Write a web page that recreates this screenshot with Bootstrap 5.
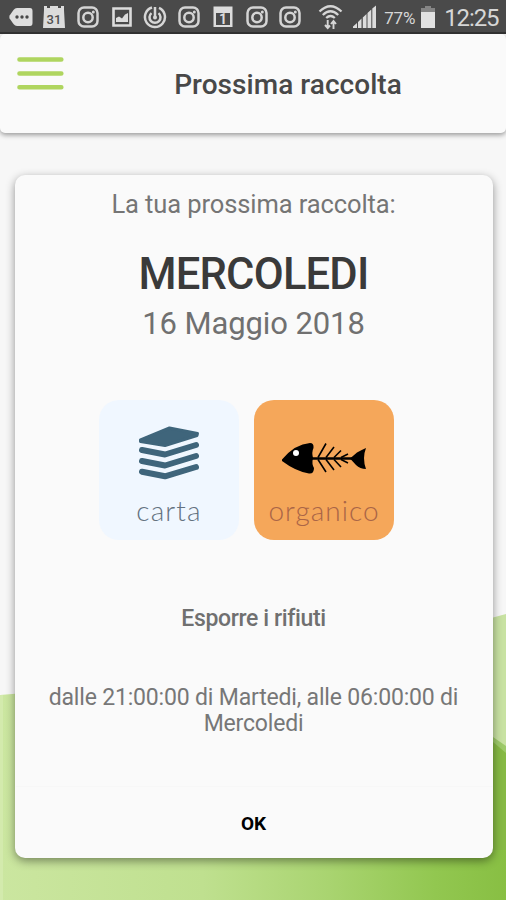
<!DOCTYPE html>
<html lang="it">
<head>
<meta charset="utf-8">
<meta name="viewport" content="width=device-width, initial-scale=1">
<title>Prossima raccolta</title>
<link href="https://cdn.jsdelivr.net/npm/bootstrap@5.3.0/dist/css/bootstrap.min.css" rel="stylesheet">
<style>
  body { font-family: Roboto, "Liberation Sans", sans-serif; background: #f7f7f7; width: 506px; height: 900px; }
  svg { display: block; flex: none; }
  .status-bar { height: 34px; background: #4a4a4a; border-bottom: 2px solid #333; color: #d6d6d6; padding: 2px 0 0 8.7px; }
  .notices { gap: 9.7px; margin-right: 16px; }
  .signal { margin-left: 10px; }
  .level { font-size: 17px; letter-spacing: -.2px; width: 31px; margin-left: 7px; margin-right: 5px; line-height: 32px; padding-top: 2px; }
  .clock { font-size: 24px; line-height: 32px; padding-top: 2px; margin-left: 8px; letter-spacing: -1.1px; }
  .app-bar { height: 98.5px; background: #fafafa; border-radius: 5px; box-shadow: 0 2px 5px rgba(0,0,0,.38); }
  .burger { padding: 22px 0 0 17px; width: 70px; }
  .app-title { font-size: 28px; font-weight: 500; color: #484848; line-height: 34px; padding: 34px 35px 0; letter-spacing: .05px; }
  .hills { inset: 0; z-index: -1; }
  .pickup { margin: 42.5px 13.5px 0 14.5px; height: 683px; border: 0; border-radius: 10px; background: #fafafa; box-shadow: 0 3px 10px rgba(0,0,0,.42); }
  .pickup-body { height: 611px; }
  .intro { font-size: 25.500px; line-height: 32px; color: #757575; padding-top: 13px; letter-spacing: -.1px; }
  .weekday { font-size: 43.500px; line-height: 52px; font-weight: 500; color: #3a3a3a; margin-top: 29px; letter-spacing: -.8px; }
  .day { font-size: 31px; line-height: 40px; color: #707070; margin-top: 3px; letter-spacing: -.1px; }
  .kinds { gap: 15px; margin: 56px 0 0 -14px; }
  .kind { width: 140px; height: 140px; border-radius: 20px; font-family: Lato, sans-serif; font-weight: 300; font-size: 28px; line-height: 34px; }
  .paper { background: #f0f7ff; color: #64727f; letter-spacing: 1.1px; }
  .organic { background: #f5a75a; color: #aa6547; letter-spacing: 1px; }
  .kind-name { padding-bottom: 13px; }
  .expose { font-size: 23px; line-height: 30px; font-weight: 500; color: #707070; margin-top: 64px; letter-spacing: -.38px; }
  .hours { font-size: 23px; line-height: 26px; color: #777; margin-top: 51px; letter-spacing: -.18px; }
  .ok-btn { height: 72px; font-size: 19px; font-weight: 700; color: #000; border-top: 1px solid #f7f7f7; border-radius: 0; padding: 5px 0 0; }
</style>
</head>
<body class="position-relative overflow-hidden m-0">
<svg class="hills position-absolute" width="506" height="900" viewBox="0 0 506 900">
  <defs>
    <linearGradient id="meadow" x1="0" y1="0" x2="1" y2="0"><stop offset="0" stop-color="#cbe6a0"/><stop offset=".4" stop-color="#bfe08f"/><stop offset=".65" stop-color="#a9d470"/><stop offset=".86" stop-color="#92c750"/><stop offset="1" stop-color="#88bf43"/></linearGradient>
  </defs>
  <path d="M300 670 506 614V780H300Z" fill="#c8e2a2"/>
  <path d="M0 695 300 670V800H506V900H0Z" fill="url(#meadow)"/>
  <path d="M480 728 506 746V756L480 744Z" fill="#9dca69"/>
  <path d="M480 731 506 753V850H480Z" fill="#86b944"/>
  <path d="M0 695H3V900H0Z" fill="#d8edb6" opacity=".6"/>
</svg>

<div class="status-bar d-flex align-items-center">
  <div class="notices d-flex align-items-center">
    <svg width="24" height="24" viewBox="0 0 24 24"><path d="M8 3H21Q23.500 3 23.500 6V18Q23.500 21 21 21H8Q6 21 4.500 19L.6 13.500Q0 12 .6 10.500L4.500 5Q6 3 8 3Z" fill="#dedede"/><g fill="#484848"><circle cx="8" cy="12" r="1.700"/><circle cx="13" cy="12" r="1.700"/><circle cx="18" cy="12" r="1.700"/></g></svg>
    <svg width="24" height="24" viewBox="0 0 24 24"><path d="M2 1H5V3H8V1H16V3H19V1H22V5L23 23H1L2 5Z" fill="#dcdcdc"/><text x="12" y="18.500" text-anchor="middle" font-family="Roboto" font-size="13" font-weight="500" fill="#505050">31</text></svg>
    <svg width="24" height="24" viewBox="0 0 24 24"><g fill="none" stroke="#d4d4d4" stroke-width="2.500"><rect x="2.500" y="2.500" width="19" height="19" rx="5.500"/><circle cx="12" cy="12.500" r="4.700"/></g><circle cx="17.300" cy="7" r="1.500" fill="#d4d4d4"/></svg>
    <svg width="24" height="24" viewBox="0 0 24 24"><path d="M3.500 3.500H20.500V20.500H3.500Z" fill="none" stroke="#dcdcdc" stroke-width="2.600"/><path d="M6 17V13L9 11.500 12 13.500 15 9.500 18 8V17Z" fill="#dcdcdc"/></svg>
    <svg width="24" height="24" viewBox="0 0 24 24"><g fill="none" stroke="#d6d6d6" stroke-width="2.500"><path d="M9 2.500A10 10 0 1 0 16 2.900M18 4A10 10 0 0 1 21.900 10"/><path d="M8.500 8.100A5.500 5.500 0 1 0 15.500 8.100M12 2V12"/></g><circle cx="12" cy="12.500" r="2" fill="#d6d6d6"/></svg>
    <svg width="24" height="24" viewBox="0 0 24 24"><g fill="none" stroke="#d4d4d4" stroke-width="2.500"><rect x="2.500" y="2.500" width="19" height="19" rx="5.500"/><circle cx="12" cy="12.500" r="4.700"/></g><circle cx="17.300" cy="7" r="1.500" fill="#d4d4d4"/></svg>
    <svg width="24" height="24" viewBox="0 0 24 24"><path d="M2.500 1.500H21.500V22H2.500ZM5 8V20H19V8Z" fill="#dcdcdc" fill-rule="evenodd"/><text x="12" y="19" text-anchor="middle" font-family="Roboto" font-size="14" font-weight="700" fill="#dcdcdc">1</text></svg>
    <svg width="24" height="24" viewBox="0 0 24 24"><g fill="none" stroke="#d4d4d4" stroke-width="2.500"><rect x="2.500" y="2.500" width="19" height="19" rx="5.500"/><circle cx="12" cy="12.500" r="4.700"/></g><circle cx="17.300" cy="7" r="1.500" fill="#d4d4d4"/></svg>
    <svg width="24" height="24" viewBox="0 0 24 24"><g fill="none" stroke="#d4d4d4" stroke-width="2.500"><rect x="2.500" y="2.500" width="19" height="19" rx="5.500"/><circle cx="12" cy="12.500" r="4.700"/></g><circle cx="17.300" cy="7" r="1.500" fill="#d4d4d4"/></svg>
  </div>
  <svg width="25" height="26" viewBox="0 0 25 26"><g fill="none" stroke="#d6d6d6" stroke-width="2.300"><path d="M1.500 7.500Q12.500-3 23.500 7.500M4.800 11Q12.500 3.500 20.200 11M8.200 14Q12.500 10 16.800 14"/><path d="M9.700 16V23.500M7 21 9.700 24 12 21.500M15.500 25V17.500M13 20 15.500 17 18 20" stroke-width="1.900"/></g></svg>
  <svg class="signal" width="24" height="24" viewBox="0 0 24 24"><g fill="#dcdcdc"><path d="M0 23V21.500L4 18V23ZM5 23V17L8.500 13.500V23Z"/><path d="M9.800 23V12.500L13.500 9V23ZM14.500 23V8L18.300 4.500V23ZM19.300 23V3.500L23 .5V23Z"/></g></svg>
  <span class="level">77%</span>
  <svg width="16" height="24" viewBox="0 0 16 24"><path d="M5 1H11V3H15V8H1V3H5Z" fill="#858585"/><path d="M1 7H15V23H1Z" fill="#e2e2e2"/></svg>
  <span class="clock">12:25</span>
</div>

<header class="app-bar d-flex">
  <div class="burger">
    <svg width="47" height="36" viewBox="0 0 47 36"><path d="M2.500 3.500H44.300M2.500 17.500H44.300M2.500 31.200H44.300" stroke="#afd55f" stroke-width="4.600" stroke-linecap="round"/></svg>
  </div>
  <h1 class="app-title flex-fill text-center m-0">Prossima raccolta</h1>
</header>

<main class="card pickup overflow-visible">
  <div class="pickup-body text-center">
    <div class="intro">La tua prossima raccolta:</div>
    <div class="weekday">MERCOLEDI</div>
    <div class="day">16 Maggio 2018</div>
    <div class="kinds d-flex justify-content-center">
      <div class="kind paper d-flex flex-column align-items-center justify-content-between">
        <svg width="140" height="90" viewBox="0 0 140 90"><g stroke="#3f657b" stroke-linejoin="round"><path d="M41.500 40 70.500 28 98.500 33.500 98 35.500 66 45.500 41.500 41.500Z" fill="#3f657b" stroke-width="3"/><path d="M43 50 66 54.500 97 45M43 61 66 65.500 97 56M43 71.700 66 76.300 97 67" fill="none" stroke-width="6" stroke-linecap="round"/></g></svg>
        <span class="kind-name">carta</span>
      </div>
      <div class="kind organic d-flex flex-column align-items-center justify-content-between">
        <svg width="140" height="90" viewBox="0 0 140 90"><path d="M28 59.500Q41 44 56 43Q60 43 59.500 48Q57.500 52 59 58Q57.500 64 60 68Q60 74 55 73.500Q42 71.500 28 61Z"/><circle cx="42" cy="53" r="3" fill="#fff"/><path d="M58 58.500H98" stroke="#000" stroke-width="2.300"/><path d="M64 57.500 72 43.500M72 57.500 80 47M80 57.500 87 50.500M87 57.500 94 54M64 59.500 72 72M72 59.500 80 70M80 59.500 87 67M87 59.500 94 63" stroke="#000" stroke-width="1.600"/><path d="M96 58.500 103 52.500Q108 49.500 112 48Q108 58 112 69Q106 69 102 65Z"/></svg>
        <span class="kind-name">organico</span>
      </div>
    </div>
    <div class="expose">Esporre i rifiuti</div>
    <div class="hours">dalle 21:00:00 di Martedi, alle 06:00:00 di<br>Mercoledi</div>
  </div>
  <button type="button" class="btn ok-btn w-100">OK</button>
</main>
<script src="https://cdn.jsdelivr.net/npm/bootstrap@5.3.0/dist/js/bootstrap.bundle.min.js"></script>
</body>
</html>
